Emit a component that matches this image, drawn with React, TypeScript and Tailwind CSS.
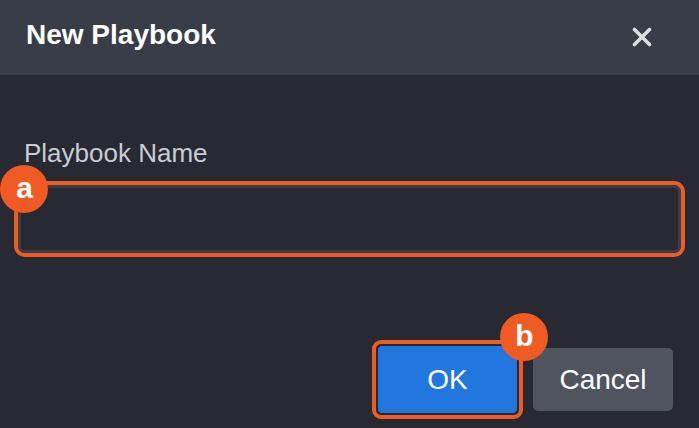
export default function App() {
  return (
    <div className="w-[699px] h-[428px] bg-[#272a33] overflow-hidden flex flex-col font-['Liberation_Sans',Arial,sans-serif]">
      <div className="h-[75px] bg-[#393d47] flex items-start justify-between pl-[26px] pr-[47px] pt-[19px] shrink-0">
        <div className="text-[28px] leading-[32px] font-bold text-white">New Playbook</div>
        <svg width="20" height="20" viewBox="0 0 20 20" className="mt-[8px]">
          <path d="M2.5 2.5 L17.5 17.5 M17.5 2.5 L2.5 17.5" stroke="#dcdee2" strokeWidth="3.6" strokeLinecap="round" />
        </svg>
      </div>
      <div className="flex flex-col px-[14px]">
        <div className="mt-[63px] pl-[10px] text-[26px] leading-[30px] text-[#c9ccd3]">Playbook Name</div>
        <div className="relative mt-[13px]">
          <div className="border-[4px] border-[#f05a23] rounded-[11px]">
            <div className="h-[68px] border-[3px] border-[#3b3e47] rounded-[7px] bg-[#272a33]" />
          </div>
          <div className="absolute left-[-14px] top-[-16px] w-[48px] h-[48px] rounded-full bg-[#f05a23] flex items-center justify-center text-white font-bold text-[30px] leading-none pb-[3px] pl-[1px]">
            a
          </div>
        </div>
        <div className="flex justify-end items-center gap-[10px] mt-[83px] pr-[12px]">
          <div className="relative">
            <div className="border-[4px] border-[#f05a23] rounded-[9px] w-[151px] h-[79px] p-[1px]">
              <div className="w-full h-full rounded-[5px] bg-[#2277de] border border-[#1d2a40] flex items-center justify-center text-white text-[28px] leading-none">
                OK
              </div>
            </div>
            <div className="absolute right-[-25px] top-[-27px] w-[48px] h-[48px] rounded-full bg-[#f05a23] flex items-center justify-center text-white font-bold text-[30px] leading-none pb-[2px] pl-[1px]">
              b
            </div>
          </div>
          <div className="w-[140px] h-[63px] rounded-[5px] bg-[#50545f] flex items-center justify-center text-white text-[28px] leading-none">
            Cancel
          </div>
        </div>
      </div>
    </div>
  );
}
